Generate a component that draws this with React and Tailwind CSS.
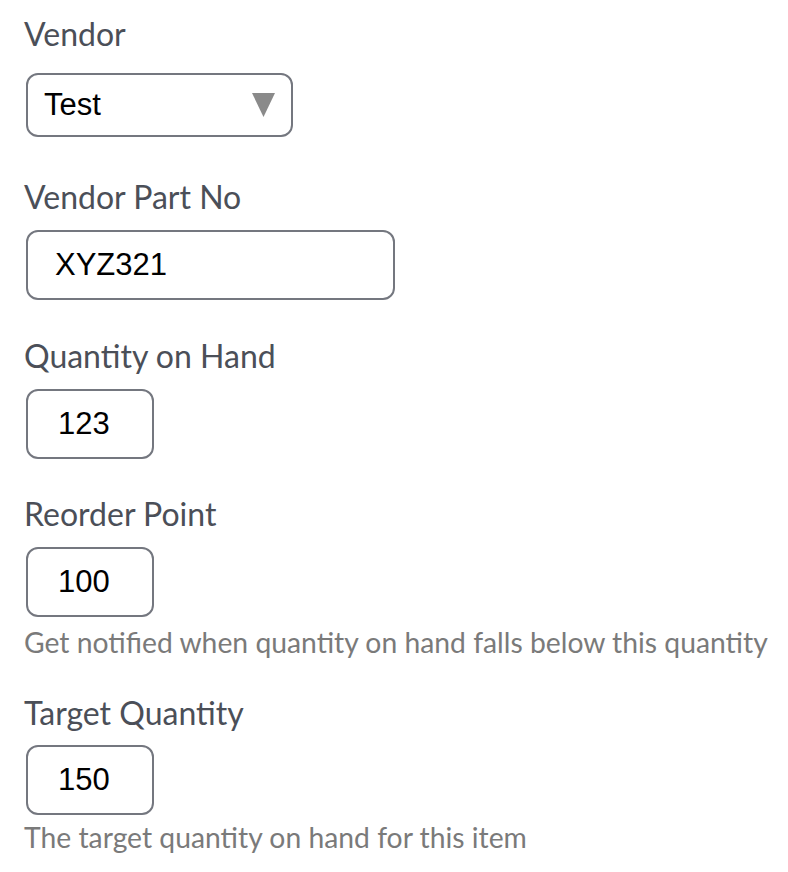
import { useState } from 'react';

const label = "-ml-[2px] block text-[32px] leading-[40px] text-[#4b4f58] font-['Lato',sans-serif]";
const help = "-ml-[2px] block text-[28.3px] leading-[36px] text-[#7a7a7a] font-['Lato',sans-serif]";
const box =
  "block h-[70px] rounded-[12px] border-2 border-[#74777f] bg-white text-[31px] text-black outline-none font-['Liberation_Sans',Arial,sans-serif]";

export default function App() {
  const [vendor] = useState('Test');
  const [partNo, setPartNo] = useState('XYZ321');
  const [qty, setQty] = useState('123');
  const [reorder, setReorder] = useState('100');
  const [target, setTarget] = useState('150');

  return (
    <div className="min-h-screen bg-white pl-[26px] pt-[14px]">
      <span className={label}>Vendor</span>
      <div className="mt-[19px] flex h-[64px] w-[267px] items-center justify-between rounded-[12px] border-2 border-[#74777f] pl-[16px] pr-[16px]">
        <span className="text-[31px] text-black font-['Liberation_Sans',Arial,sans-serif]">{vendor}</span>
        <svg width="23" height="24" viewBox="0 0 23 24">
          <polygon points="0,0 23,0 11.5,24" fill="#8a8a8a" />
        </svg>
      </div>

      <span className={label + ' mt-[40px]'}>Vendor Part No</span>
      <input
        value={partNo} onChange={(e) => setPartNo(e.target.value)}
        className={box + ' mt-[13px] w-[369px] px-[27px]'}
      />

      <span className={label + ' mt-[36px]'}>Quantity on Hand</span>
      <input
        value={qty} onChange={(e) => setQty(e.target.value)}
        className={box + ' mt-[13px] w-[128px] px-[30px]'}
      />

      <span className={label + ' mt-[35px]'}>Reorder Point</span>
      <input
        value={reorder} onChange={(e) => setReorder(e.target.value)}
        className={box + ' mt-[13px] w-[128px] px-[30px]'}
      />
      <span className={help + ' mt-[7px]'}>Get notified when quantity on hand falls below this quantity</span>

      <span className={label + ' mt-[33px]'}>Target Quantity</span>
      <input
        value={target} onChange={(e) => setTarget(e.target.value)}
        className={box + ' mt-[12px] w-[128px] px-[30px]'}
      />
      <span className={help + ' mt-[4px]'}>The target quantity on hand for this item</span>
    </div>
  );
}
